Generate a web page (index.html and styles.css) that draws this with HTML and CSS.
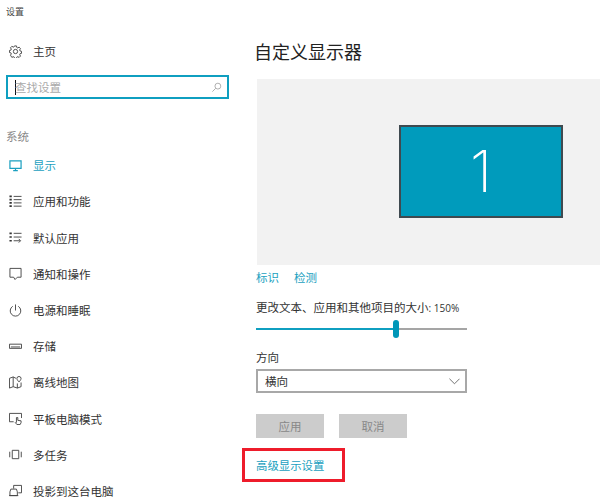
FILE: index.html
```html
<!DOCTYPE html>
<html lang="zh-CN">
<head>
<meta charset="utf-8">
<title>设置</title>
<link rel="stylesheet" href="styles.css">
</head>
<body>
<div class="app">
  <aside class="side">
    <div class="apptitle">设置</div>
    <div class="nav home">
      <svg class="ico" viewBox="0 0 14 14"><path d="M5.900 1h2.200l.3 1.700 1 .5 1.500-.9 1.500 1.600-.9 1.400.4 1.100 1.600.4v2.200l-1.600.4-.4 1 .9 1.500-1.500 1.500-1.500-.9-1 .5-.3 1.600H5.900l-.3-1.600-1-.5-1.500.9L1.600 11l.9-1.500-.4-1L.5 8.100V5.900l1.600-.4.4-1.100-.9-1.400 1.500-1.600 1.500.9 1-.5z"/><circle cx="7" cy="7" r="2.300"/></svg>
      <span>主页</span>
    </div>
    <div class="search">
      <span class="caret"></span>
      <span class="ph">查找设置</span>
      <svg class="glass" viewBox="0 0 12 12"><circle cx="7.500" cy="4.500" r="3.200"/><path d="M5.200 6.800 1.500 10.500"/></svg>
    </div>
    <div class="group">系统</div>
    <div class="nav active">
      <svg class="ico" viewBox="0 0 14 14"><path d="M1 2h12v8H1zM4.500 12.500h5M7 10v2.500"/></svg>
      <span>显示</span>
    </div>
    <div class="nav">
      <svg class="ico" viewBox="0 0 14 14"><path d="M5 1.500h8.500M5 5h8.500M5 8.500h8.500M5 12h8.500"/><path class="thick" d="M.5 1.500H3M.5 5H3M.5 8.500H3M.5 12H3"/></svg>
      <span>应用和功能</span>
    </div>
    <div class="nav">
      <svg class="ico" viewBox="0 0 14 14"><path d="M5 2.500h8.500M5 6.500h8.500M5 10.500h7M10.500 8.500l2 2-2 2"/><path class="thick" d="M.5 2.500H3M.5 6.500H3M.5 10.500H3"/></svg>
      <span>默认应用</span>
    </div>
    <div class="nav">
      <svg class="ico" viewBox="0 0 14 14"><path d="M1 1.500h12v9.500H9L6.500 13.500 5 11H1z"/></svg>
      <span>通知和操作</span>
    </div>
    <div class="nav">
      <svg class="ico" viewBox="0 0 14 14"><path d="M7 .5v6.500M4 2.500a5.700 5.700 0 1 0 6 0"/></svg>
      <span>电源和睡眠</span>
    </div>
    <div class="nav">
      <svg class="ico" viewBox="0 0 14 14"><path d="M.5 4.500h13v4.500H.5zM2 7.500h10"/></svg>
      <span>存储</span>
    </div>
    <div class="nav">
      <svg class="ico" viewBox="0 0 14 14"><path d="M7.500 2.500 4.500 1 .5 2.500v10.500l4-1.500 4.500 1.500 4-1.500V7M4.500 1v10.500M9 8v5M10.800.5A2.300 2.300 0 0 1 13 2.800C13 4 10.800 6.500 10.800 6.500S8.500 4 8.500 2.800A2.300 2.300 0 0 1 10.800.5z"/></svg>
      <span>离线地图</span>
    </div>
    <div class="nav">
      <svg class="ico" viewBox="0 0 14 14"><path d="M5 10.500H.5v-9h13v5M8 6v5.500M8 6h1.500v3l3.500.5v2L12 13.500H8.500L6.500 11"/></svg>
      <span>平板电脑模式</span>
    </div>
    <div class="nav">
      <svg class="ico" viewBox="0 0 14 14"><path d="M3.500 2.500h7v9h-7zM.8 4v6M13.200 4v6"/></svg>
      <span>多任务</span>
    </div>
    <div class="nav">
      <svg class="ico" viewBox="0 0 14 14"><path d="M5 5V1.500h8.500v8H10M1 12.500V8.500l1-3h6l1 3v4zM0 12.500h10"/></svg>
      <span>投影到这台电脑</span>
    </div>
  </aside>
  <main class="main">
    <h1 class="title">自定义显示器</h1>
    <div class="preview">
      <div class="monitor">1</div>
    </div>
    <div class="links">
      <span>标识</span>
      <span>检测</span>
    </div>
    <div class="label scale">更改文本、应用和其他项目的大小<span class="num">: 150%</span></div>
    <div class="slider">
      <div class="fill"></div>
      <div class="thumb"></div>
      <div class="rest"></div>
    </div>
    <div class="label dir">方向</div>
    <div class="select">
      <span>横向</span>
      <svg class="chev" viewBox="0 0 12 7"><path d="M.5.500 6 6l5.500-5.500"/></svg>
    </div>
    <div class="buttons">
      <div class="btn">应用</div>
      <div class="btn">取消</div>
    </div>
    <div class="advanced">
      <span>高级显示设置</span>
      <div class="redbox"></div>
    </div>
  </main>
</div>
</body>
</html>
```

FILE: styles.css
```css
* { box-sizing: border-box; }
html, body { margin: 0; height: 500px; overflow: hidden; background: #fff; }
body { font-family: "Noto Sans CJK SC", "Liberation Sans", sans-serif; font-size: 11.5px; color: #333; }
.app { display: flex; height: 500px; overflow: hidden; }
.side { width: 240px; flex: none; padding-left: 6px; }
.apptitle { font-size: 9px; line-height: 12px; margin-top: 6px; color: #444; }
.nav { display: flex; align-items: center; height: 36.200px; padding-left: 3px; gap: 11px; flex: none; }
.nav span { line-height: 16px; }
.home { margin-top: 15px; }
.ico { width: 13px; height: 13px; flex: none; fill: none; stroke: #444; stroke-width: 1; }
.ico .thick { stroke-width: 1.800; stroke: #333; }
.search { display: flex; align-items: center; width: 223px; height: 24px; margin-top: 6px; border: 2px solid #0f9fc0; padding: 0 5px 0 7px; }
.caret { width: 1px; height: 15px; background: #111; flex: none; }
.ph { flex: 1; color: #aaa; margin-left: -1px; }
.glass { width: 11px; height: 11px; fill: none; stroke: #aaa; stroke-width: 1; }
.group { margin-top: 28px; color: #888; line-height: 18px; }
.active { margin-top: 2px; color: #1a9fc0; }
.active .ico { stroke: #1a9fc0; stroke-width: 1.300; }
.main { flex: 1; min-width: 0; padding-left: 16px; }
.title { margin: 38px 0 0 -2px; font-size: 18px; font-weight: 400; line-height: 27px; color: #222; }
.preview { display: flex; justify-content: flex-end; height: 186px; margin: 14px 0 0 1px; padding: 46px 37px 0 0; background: #f2f2f2; }
.monitor { width: 164px; height: 93px; background: #009bbc; border: 2px solid #3f4a50; color: #fff; text-align: center; font: 200 58px/88px Inter, "Liberation Sans", sans-serif; }
.links { display: flex; gap: 15px; margin-top: 4px; color: #1a9fc0; line-height: 16px; }
.label { line-height: 16px; color: #333; }
.num { font-family: "Open Sans", sans-serif; font-size: 10px; }
.scale { margin-top: 14px; }
.slider { position: relative; display: flex; align-items: center; width: 211px; height: 18px; margin-top: 4px; }
.fill { width: 137px; height: 2px; background: #0f9fc0; }
.rest { flex: 1; height: 2px; background: #a5a5a5; }
.thumb { width: 6px; height: 18px; border-radius: 3px; background: #0097b8; flex: none; }
.dir { margin-top: 11px; }
.select { display: flex; align-items: center; justify-content: space-between; width: 211px; height: 24px; margin-top: 4px; border: 2px solid #a8a8a8; padding: 0 5px 0 7px; }
.chev { width: 11px; height: 7px; fill: none; stroke: #666; stroke-width: 1; }
.buttons { display: flex; gap: 15px; margin-top: 21px; }
.btn { width: 68px; height: 24px; background: #ccc; color: #888; text-align: center; line-height: 24px; }
.advanced { position: relative; margin-top: 19px; color: #1a9fc0; line-height: 16px; font-size: 11.400px; }
.redbox { position: absolute; left: -14px; top: -9px; width: 103px; height: 34px; border: 3px solid #ee1c2b; }
```
